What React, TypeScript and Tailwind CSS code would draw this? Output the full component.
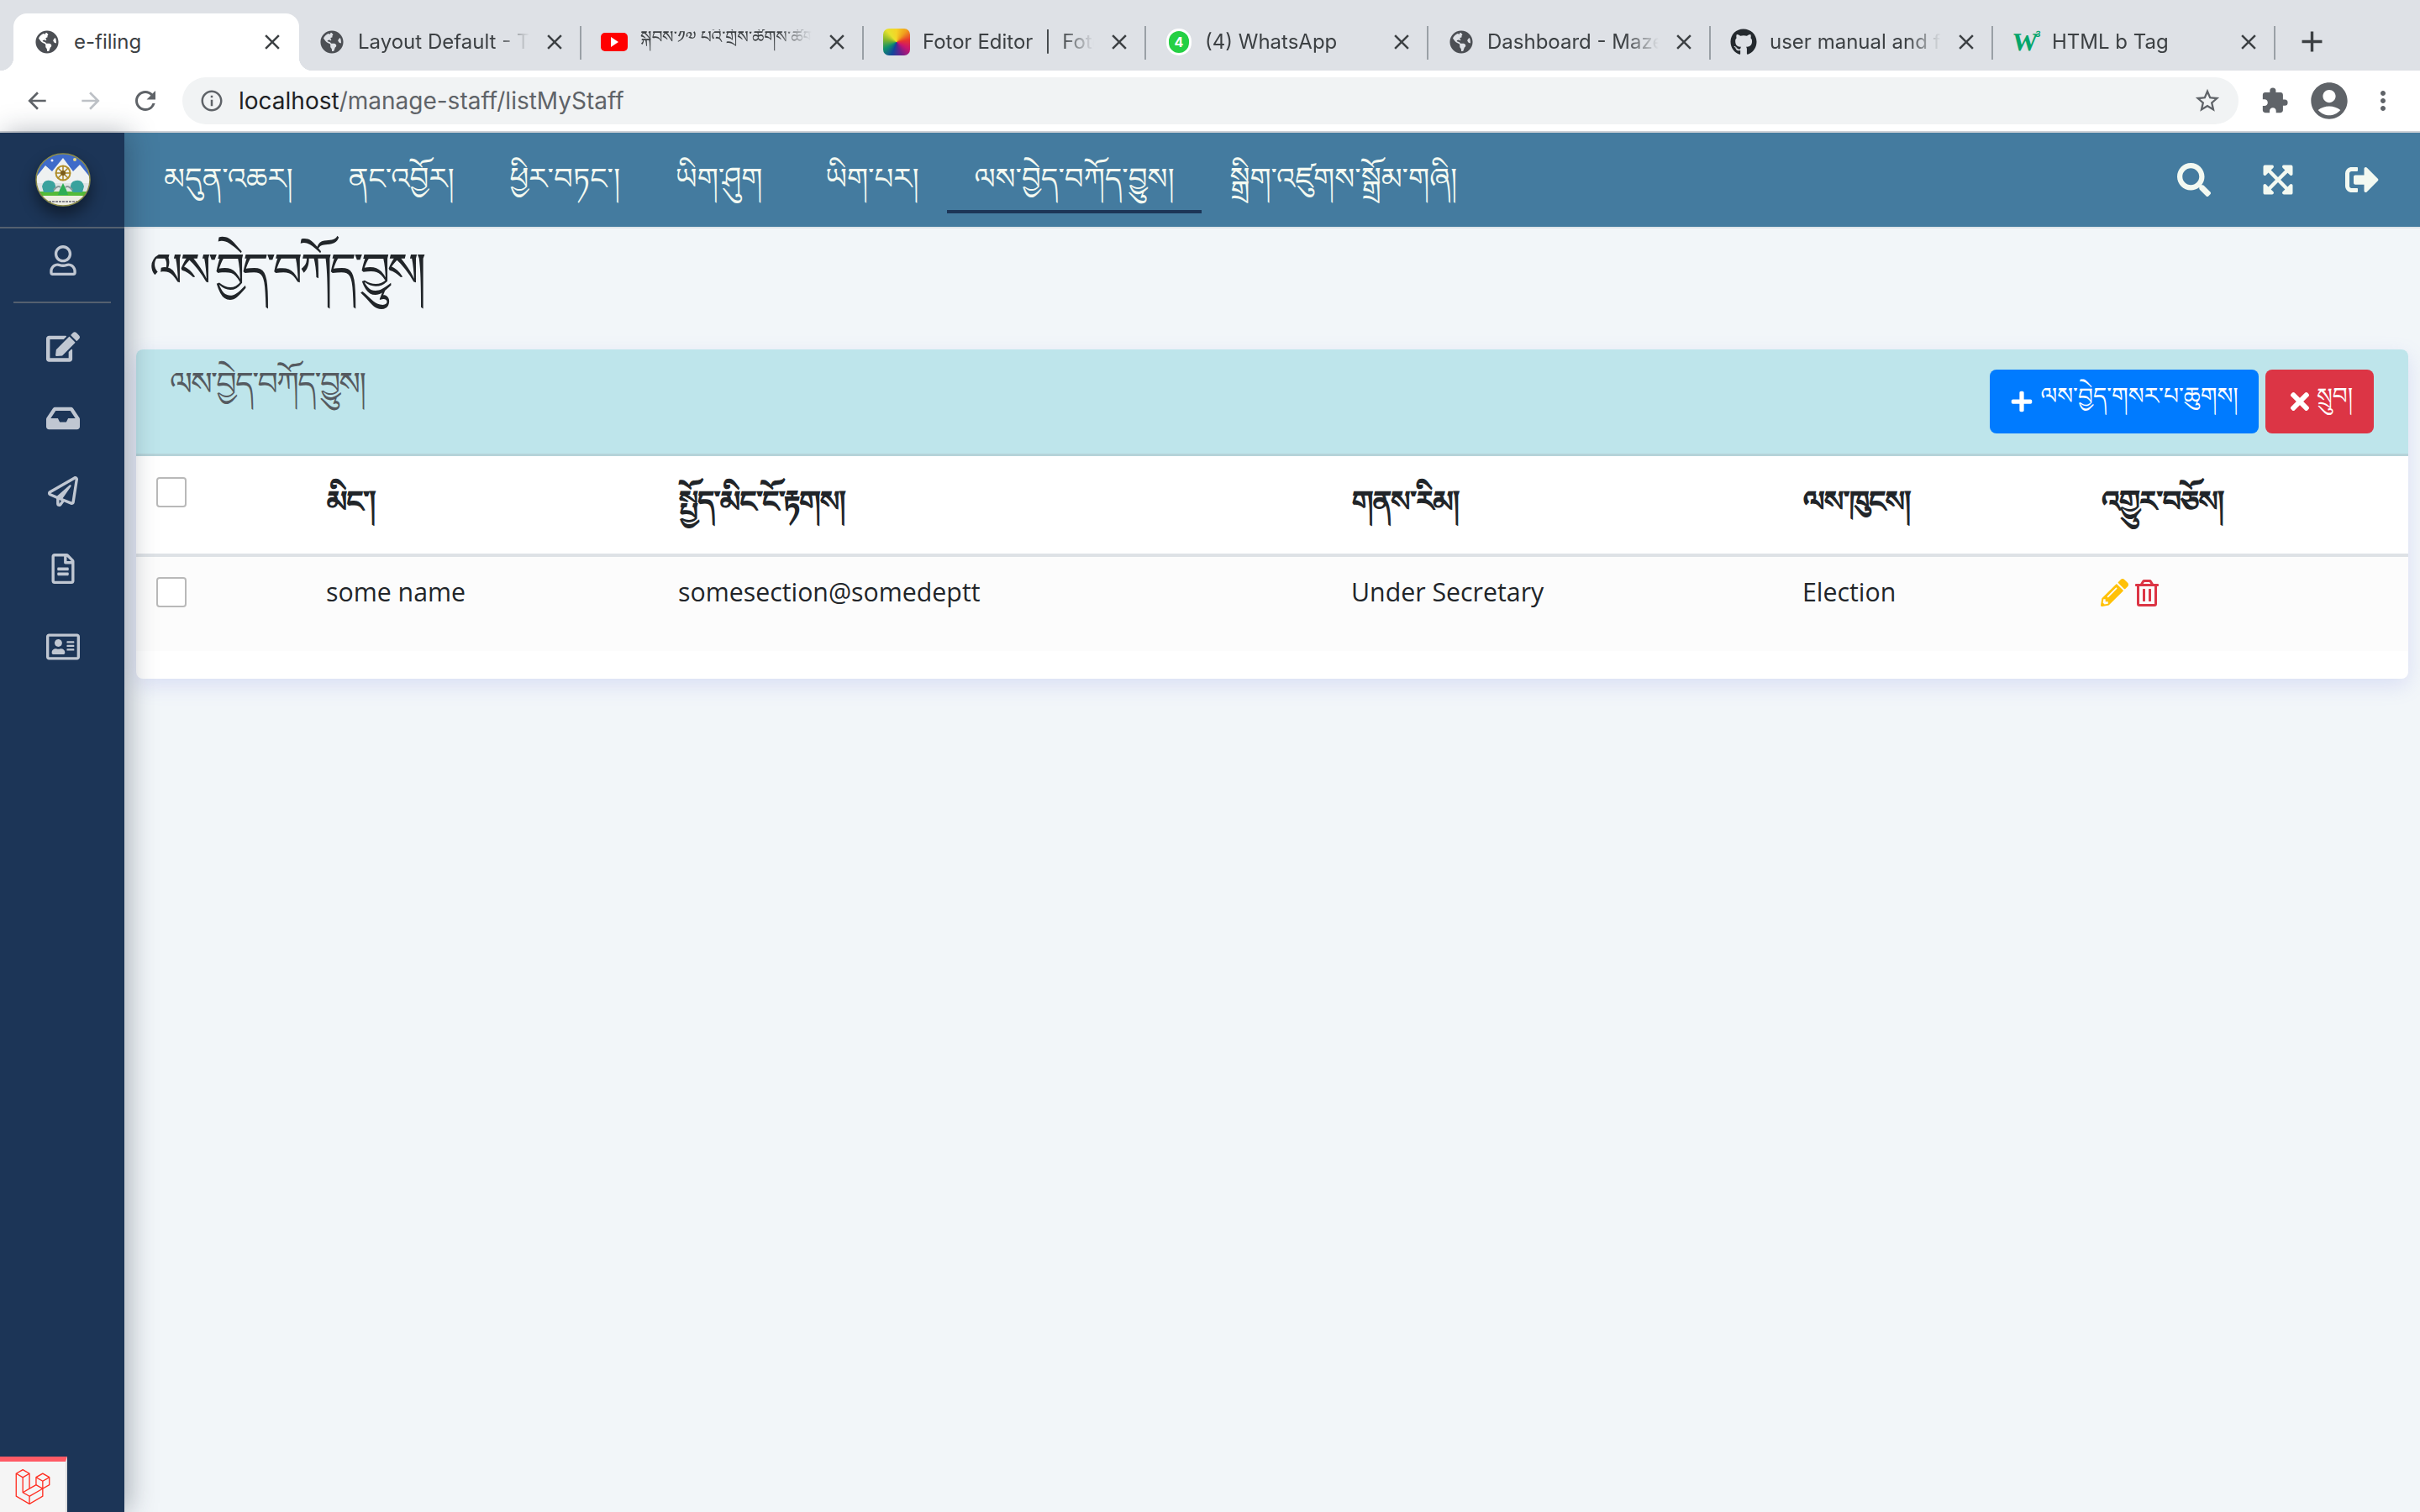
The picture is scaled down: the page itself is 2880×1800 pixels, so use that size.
import React from "react";
import { FaGlobeAmericas, FaGithub, FaRegUser, FaEdit, FaInbox, FaRegPaperPlane, FaRegFileAlt, FaRegAddressCard, FaSearch, FaExpandArrowsAlt, FaSignOutAlt, FaPlus, FaTimes, FaPencilAlt, FaRegTrashAlt, FaLaravel } from "react-icons/fa";
import { MdArrowBack, MdArrowForward, MdRefresh, MdInfoOutline, MdStarBorder, MdExtension, MdAccountCircle, MdMoreVert, MdClose, MdAdd } from "react-icons/md";

const globe = <FaGlobeAmericas className="text-[28px] text-[#4c4f54]" />;

const tabs: { icon: React.ReactNode; title: string; tib?: boolean }[] = [
  { icon: globe, title: "Layout Default - Tekton" },
  { icon: <div className="w-8 h-[22px] rounded-[5px] bg-[#ff0000] flex items-center justify-center"><div className="w-0 h-0 border-y-[6px] border-y-transparent border-l-[9px] border-l-white" /></div>, title: "སྐབས་༡༧ པའི་གྲོས་ཚོགས་ཚོགས་", tib: true },
  { icon: <div className="w-8 h-8 rounded-[7px] bg-[conic-gradient(#f5d327,#f0a01e,#e8352e,#c9156e,#6a1f8c,#13459c,#0f8f6c,#7fb42c,#e6e22e,#f5d327)]" />, title: "Fotor Editor  |  Fotor" },
  { icon: <div className="w-[30px] h-[32px] rounded-full bg-[#25d044] border-[3px] border-white flex items-center justify-center text-white text-[16px] font-bold leading-none">4</div>, title: "(4) WhatsApp" },
  { icon: globe, title: "Dashboard - Maze Admin" },
  { icon: <FaGithub className="text-[32px] text-[#24292e]" />, title: "user manual and faq" },
  { icon: <div className="w-8 flex items-start text-[#04a56b] font-bold leading-none -skew-x-6"><span className="text-[30px] [font-family:'Liberation_Serif',serif]">W</span><span className="text-[10px] -ml-1">3</span></div>, title: "HTML b Tag" },
];

const tibFont = "[font-family:'Noto_Serif_Tibetan','Noto_Sans_Tibetan','Jomolhari','Tibetan_Machine_Uni','DejaVu_Sans',sans-serif]";

const navItems = ["མདུན་འཆར།", "ནང་འབྱོར།", "ཕྱིར་བཏང་།", "ཡིག་ཤུག", "ཡིག་པར།", "ལས་བྱེད་བཀོད་བྱུས།", "སྒྲིག་འཛུགས་སྒྲོམ་གཞི།"];

const Tab = ({ icon, title, tib }: { icon: React.ReactNode; title: string; tib?: boolean }) => (
  <div className="relative w-[336px] h-[68px] shrink-0 flex items-center pl-[22px]">
    <div className="w-[34px] shrink-0 flex justify-center">{icon}</div>
    <div className={`ml-[14px] w-[204px] overflow-hidden whitespace-pre text-[#3c4043] [mask-image:linear-gradient(to_right,black_80%,transparent)] ${tib ? "text-[20px] " + tibFont : "text-[24px]"}`}>{title}</div>
    <MdClose className="absolute left-[289px] top-[19px] text-[#3c4043] text-[30px]" />
    <div className="absolute right-0 top-[15px] h-[40px] w-0.5 bg-[#9aa0a6]" />
  </div>
);

const SideIcon = ({ h, children }: { h: string; children: React.ReactNode }) => (
  <div className={`${h} w-full flex items-center justify-center pl-0.5 text-[#c0c7d2]`}>{children}</div>
);

export default function App() {
  return (
    <div className="w-[2880px] h-[1800px] relative overflow-hidden flex flex-col bg-[#f2f6f9] [font-family:'Inter',sans-serif]">
      {/* Browser tabs */}
      <div className="h-[84px] shrink-0 bg-[#dee1e6] flex items-end pl-4">
        <div className="relative w-[340px] h-[68px] shrink-0 bg-white rounded-t-[16px] flex items-center pl-[26px]">
          <span className="absolute -left-4 bottom-0 w-4 h-4 bg-[radial-gradient(circle_at_0_0,transparent_16px,white_16.5px)]" />
          <span className="absolute -right-4 z-10 bottom-0 w-4 h-4 bg-[radial-gradient(circle_at_100%_0,transparent_16px,white_16.5px)]" />
          <div className="w-7 shrink-0">{globe}</div>
          <div className="ml-[18px] text-[24px] text-[#3c4043]">e-filing</div>
          <MdClose className="absolute left-[293px] top-[19px] text-[#3c4043] text-[30px]" />
        </div>
        {tabs.map((t) => <Tab key={t.title} {...t} />)}
        <MdAdd className="ml-[23px] mb-[14px] text-[#3c4043] text-[41px]" />
      </div>

      {/* Browser toolbar */}
      <div className="h-[72px] shrink-0 bg-white flex items-center">
        <MdArrowBack className="ml-[28px] text-[32px] text-[#5f6368]" />
        <MdArrowForward className="ml-[32px] text-[32px] text-[#bdc1c6]" />
        <MdRefresh className="ml-[31px] text-[36px] text-[#5f6368]" />
        <div className="ml-[26px] w-[2447px] h-14 rounded-[28px] bg-[#f1f3f4] flex items-center pl-5 pr-5">
          <MdInfoOutline className="text-[30px] text-[#5f6368]" />
          <div className="ml-[17px] text-[28px] leading-none text-[#202124]">localhost<span className="text-[#5f6368]">/manage-staff/listMyStaff</span></div>
          <MdStarBorder className="ml-auto text-[34px] text-[#5f6368]" />
        </div>
        <MdExtension className="ml-[26px] text-[34px] text-[#5f6368]" />
        <MdAccountCircle className="ml-[22px] text-[52px] text-[#5f6368]" />
        <MdMoreVert className="ml-[20px] text-[36px] text-[#5f6368]" />
      </div>
      <div className="h-0.5 shrink-0 bg-[#ced1d6]" />

      {/* App */}
      <div className="flex-1 flex min-h-0">
        <aside className="relative z-10 w-[148px] shrink-0 bg-[#1c3557] flex flex-col items-center shadow-[6px_0_30px_rgba(30,40,60,0.34)]">
          <div className="w-full h-[112px] flex items-center justify-center pl-0.5">
            <div className="rounded-full shadow-[0_10px_18px_rgba(0,0,0,0.45)]">
              <svg viewBox="0 0 66 64" className="block w-[66px] h-[64px]">
                <defs>
                  <clipPath id="seal"><ellipse cx="33" cy="32" rx="32" ry="31" /></clipPath>
                </defs>
                <g clipPath="url(#seal)">
                  <rect width="66" height="64" fill="#dfe4e4" />
                  <rect width="66" height="30" fill="#3f6bc9" />
                  <path d="M0 30 L12 15 L20 22 L33 6 L45 22 L53 14 L66 30 V36 H0 Z" fill="#eef1f1" />
                  <rect y="46" width="66" height="6" fill="#55bb38" />
                  <rect y="51" width="66" height="13" fill="#eeeee2" />
                  <path d="M8 58 H58" stroke="#667" strokeWidth="1.5" strokeDasharray="3 1" />
                  <path d="M8 40 q2 -9 10 -7 q7 1 6 10 l-3 4 h-11 z" fill="#3aa29d" />
                  <path d="M58 40 q-2 -9 -10 -7 q-7 1 -6 10 l3 4 h11 z" fill="#3aa29d" />
                  <path d="M27 50 l2 -6 l4 -8 l4 8 l2 6 z" fill="#2fae55" />
                  <path d="M22 44 q5 -6 8 -3 M44 44 q-5 -6 -8 -3" stroke="#8a9a9a" strokeWidth="2" fill="none" />
                  <circle cx="33" cy="24" r="8.5" fill="none" stroke="#b4922c" strokeWidth="2" />
                  <path d="M33 15 V33 M24 24 H42 M27 18 L39 30 M39 18 L27 30" stroke="#a98522" strokeWidth="1.5" />
                  <circle cx="33" cy="24" r="3" fill="#7b5c1c" />
                  <circle cx="20" cy="9" r="1.5" fill="#eef" />
                  <circle cx="47" cy="8" r="2" fill="#e6d98a" />
                </g>
                <ellipse cx="33" cy="32" rx="32" ry="31" fill="none" stroke="#8b8a46" strokeWidth="1.5" />
              </svg>
            </div>
          </div>
          <div className="w-full h-0.5 bg-[#54606f]" />
          <div className="h-[87px] w-full flex items-center justify-center pl-0.5 pb-[12px] text-[#c0c7d2]"><FaRegUser className="text-[36px]" /></div>
          <div className="w-[116px] h-0.5 bg-[#54606f]" />
          <SideIcon h="h-[104px]"><FaEdit className="text-[40px]" /></SideIcon>
          <SideIcon h="h-[66px]"><FaInbox className="text-[40px]" /></SideIcon>
          <SideIcon h="h-[108px]"><FaRegPaperPlane className="text-[36px]" /></SideIcon>
          <SideIcon h="h-[76px]"><FaRegFileAlt className="text-[36px]" /></SideIcon>
          <SideIcon h="h-[110px]"><FaRegAddressCard className="text-[40px]" /></SideIcon>
        </aside>

        <div className="flex-1 min-w-0 flex flex-col">
          <nav className="h-[112px] shrink-0 bg-[#447b9f] flex items-center pl-[15px] pr-[49px]">
            {navItems.map((n, i) => (
              <div key={n} className={`h-[112px] flex items-center px-8 pt-[20px] whitespace-nowrap text-[35.6px] leading-none text-[#f3f9f1] ${tibFont} relative ${i === 3 ? "mr-[11px]" : "mr-0.5"}`}>
                {n}
                {i === 5 && <div className="absolute left-0 right-0 bottom-[16px] h-1 bg-[#1c3557]" />}
              </div>
            ))}
            <div className="ml-auto flex items-center gap-[60px] text-[#f3f9f1]">
              <FaSearch className="text-[40px]" />
              <FaExpandArrowsAlt className="text-[40px]" />
              <FaSignOutAlt className="text-[40px]" />
            </div>
          </nav>
          <div className="h-0.5 shrink-0 bg-[#dfe5ea]" />

          <main className="flex-1 min-h-0 pl-[14px] pr-[14px]">
            <h1 className={`h-[144px] pt-[30px] pl-[16px] text-[56px] tracking-[-3.8px] leading-[1.3] text-[#212529] font-normal ${tibFont}`}>ལས་བྱེད་བཀོད་བྱུས།</h1>
            <div className="w-[2704px] rounded-lg bg-white shadow-[0_8px_24px_rgba(120,130,230,0.2)] pb-[33px]">
              <div className="h-[127px] rounded-t-lg bg-[#bee5eb] border-b-[3px] border-[#b5d3d9] flex items-start justify-between pt-6 pr-[41px] pl-10">
                <div className={`mt-[5px] text-[38px] tracking-[-1.7px] leading-[1.2] text-[#555a60] ${tibFont}`}>ལས་བྱེད་བཀོད་བྱུས།</div>
                <div className="flex gap-2">
                  <div className={`w-[320px] h-[76px] rounded-lg bg-[#007bff] text-white flex items-center justify-center gap-2 text-[28px] ${tibFont}`}><FaPlus className="text-[28px]" /><span className="pt-1">ལས་བྱེད་གསར་པ་ཆུགས།</span></div>
                  <div className={`w-[129px] h-[76px] rounded-lg bg-[#dc3545] text-white flex items-center justify-center gap-1 text-[28px] ${tibFont}`}><FaTimes className="text-[32px]" /><span className="pt-1">སྲུབ།</span></div>
                </div>
              </div>
              <table className="w-full table-fixed border-collapse text-left">
                <colgroup>
                  <col className="w-[202px]" />
                  <col className="w-[419px]" />
                  <col className="w-[801px]" />
                  <col className="w-[537px]" />
                  <col className="w-[355px]" />
                  <col />
                </colgroup>
                <thead>
                  <tr className={`h-[118px] border-b-4 border-[#dee2e6] text-[36px] tracking-[-2.8px] text-[#212529] ${tibFont}`}>
                    <th className="pl-6 align-top pt-[25px] font-normal"><div className="w-9 h-9 rounded border-2 border-[#b9b9b9] bg-white" /></th>
                    <th className="pl-6 pt-3 font-bold">མིང་།</th>
                    <th className="pl-6 pt-3 font-bold">སྤྱོད་མིང་ངོ་རྟགས།</th>
                    <th className="pl-6 pt-3 font-bold">གནས་རིམ།</th>
                    <th className="pl-6 pt-3 font-bold">ལས་ཁུངས།</th>
                    <th className="pl-6 pt-3 font-bold">འགྱུར་བཅོས།</th>
                  </tr>
                </thead>
                <tbody>
                  <tr className="h-[114px] bg-[#fcfcfc] text-[30.3px] text-[#212529] [font-family:'Open_Sans',sans-serif] align-top">
                    <td className="pl-6 pt-6"><div className="w-9 h-9 rounded border-2 border-[#b9b9b9] bg-white" /></td>
                    <td className="pl-6 pt-[19px]">some name</td>
                    <td className="pl-6 pt-[19px]">somesection@somedeptt</td>
                    <td className="pl-6 pt-[19px]">Under Secretary</td>
                    <td className="pl-6 pt-[19px]">Election</td>
                    <td className="pl-6 pt-[26px]">
                      <div className="flex items-center gap-[6px]">
                        <FaPencilAlt className="text-[33px] text-[#ffc107]" />
                        <FaRegTrashAlt className="text-[32px] text-[#dc3545]" />
                      </div>
                    </td>
                  </tr>
                </tbody>
              </table>
            </div>
          </main>
        </div>
      </div>

      {/* Debug bar tab */}
      <div className="absolute z-20 left-0 bottom-0 w-20 h-[66px] bg-[#f5f5f5] border-t-[6px] border-[#ff5a65] border-r-2 border-r-[#dddddd] flex items-center justify-center">
        <FaLaravel className="text-[42px] text-[#ff2d20]" />
      </div>
    </div>
  );
}
